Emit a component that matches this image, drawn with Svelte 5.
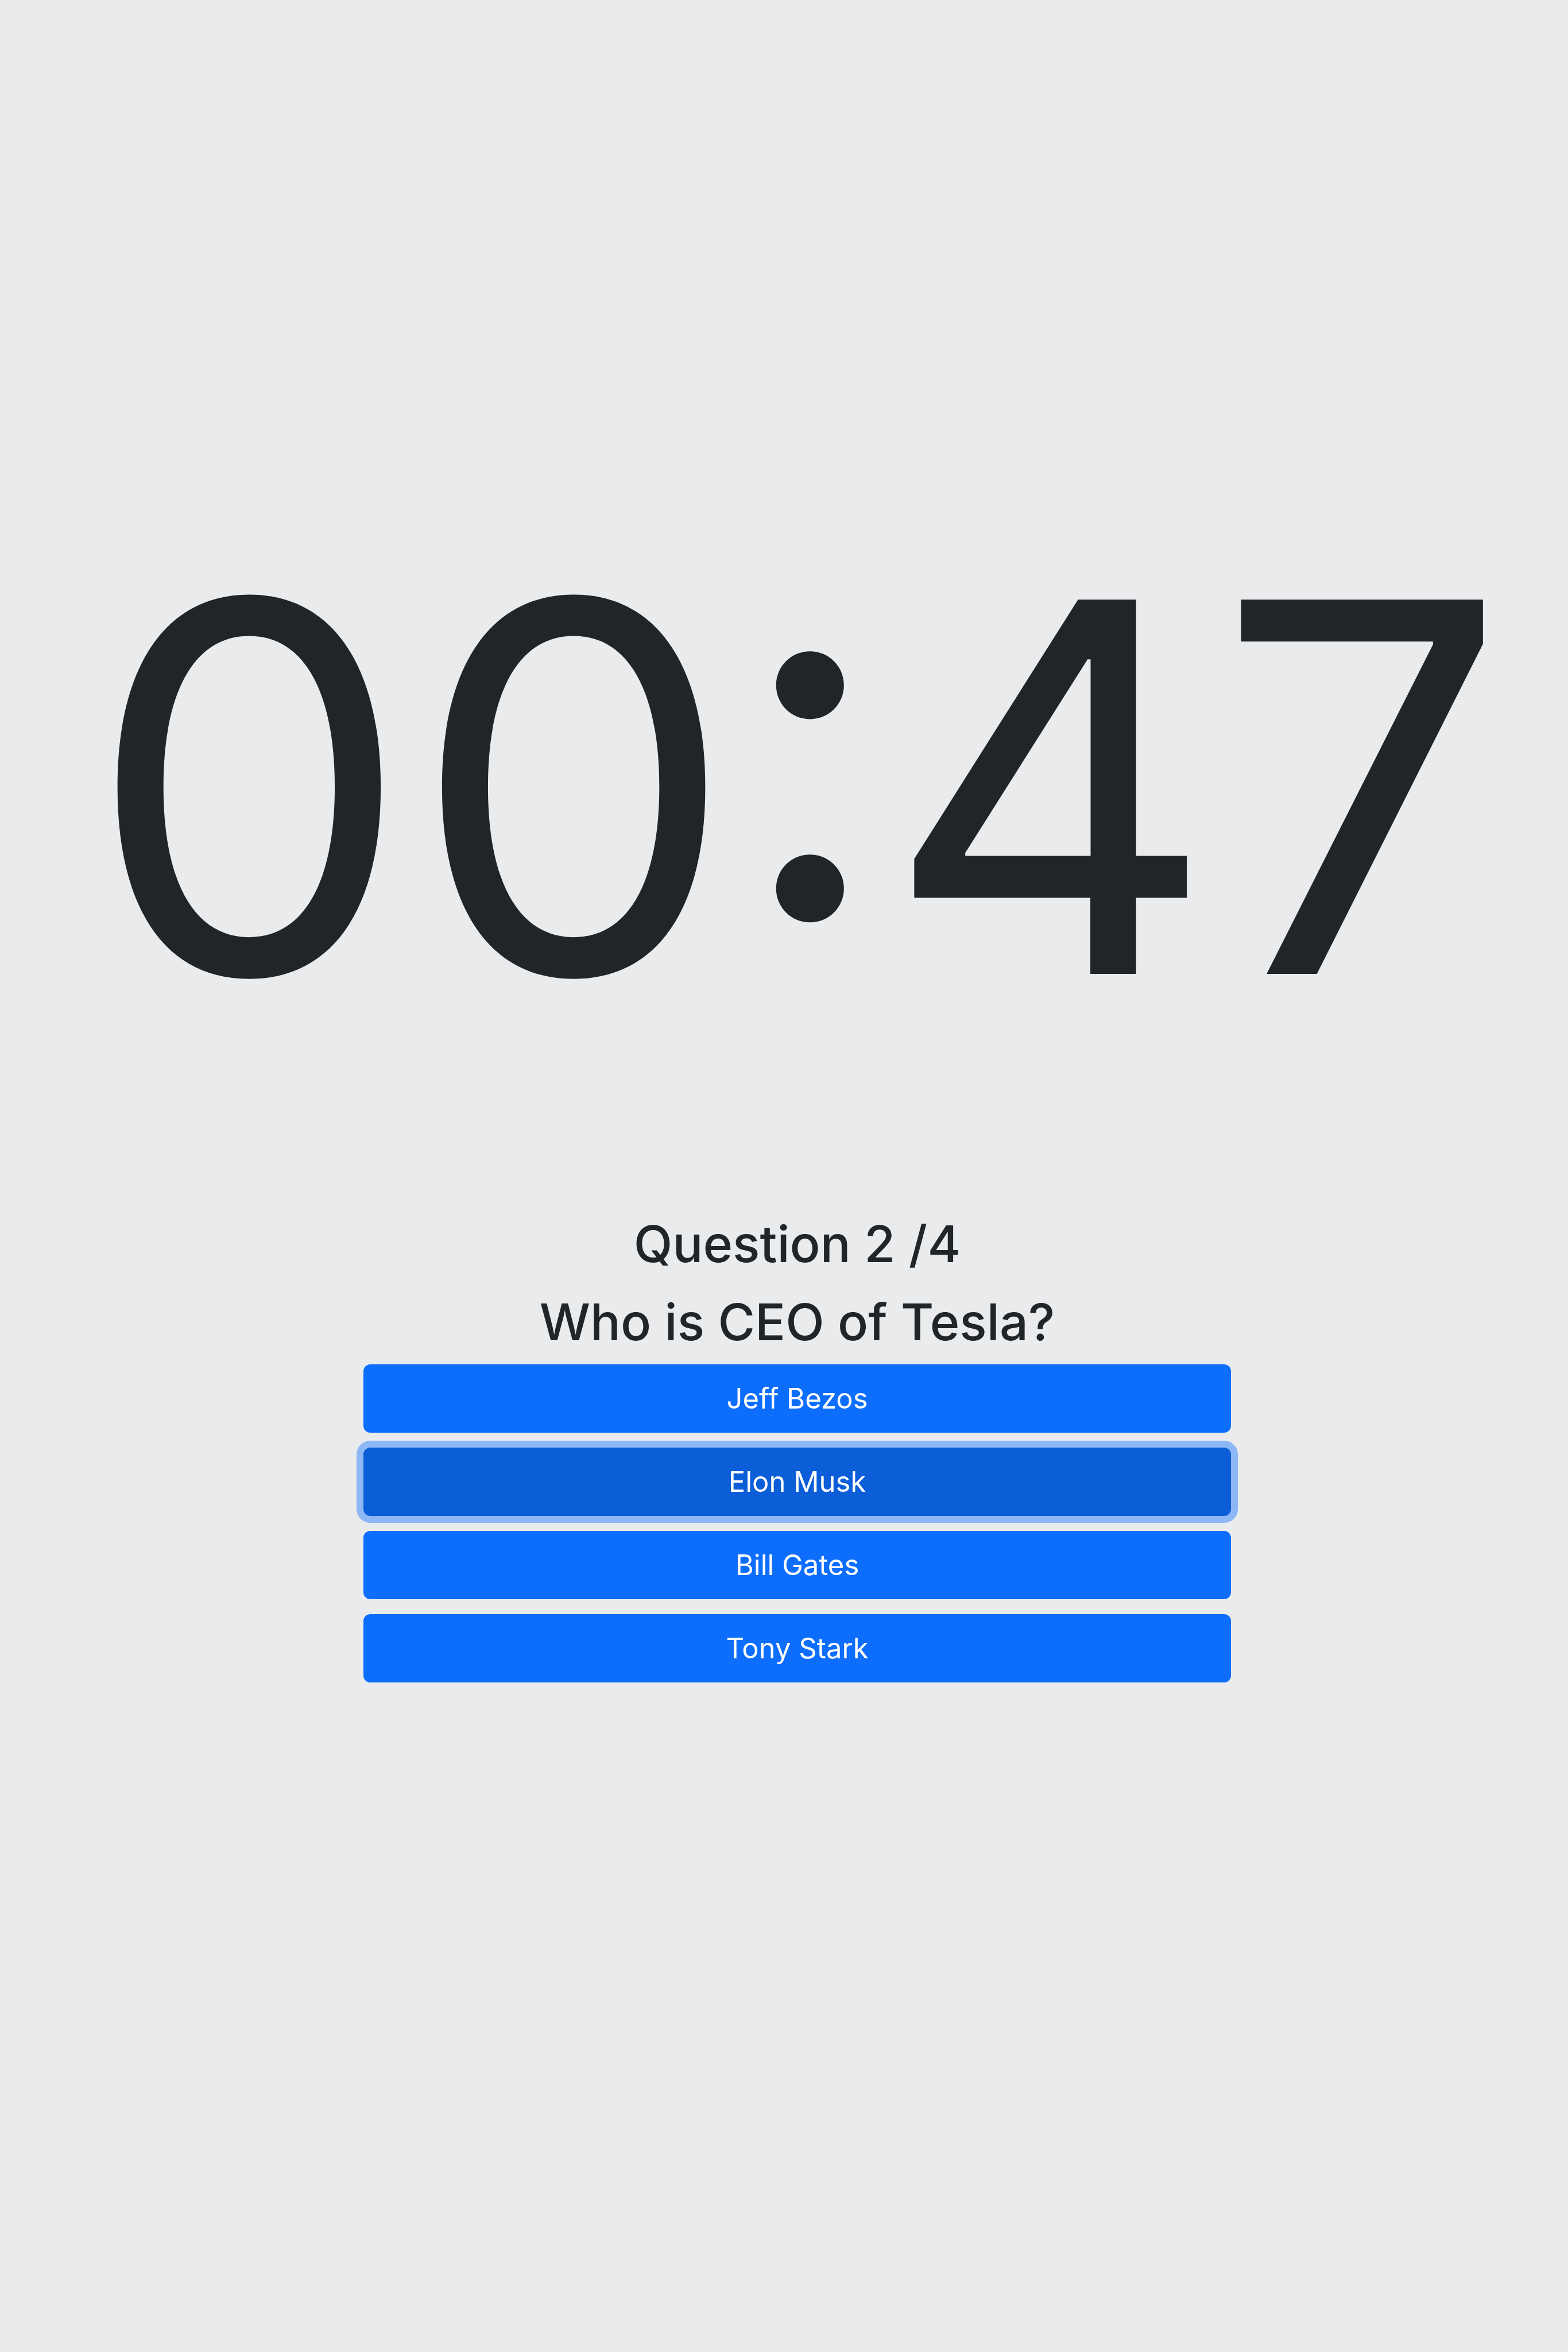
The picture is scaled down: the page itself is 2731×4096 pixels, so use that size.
<script>
  const answers = ['Jeff Bezos', 'Elon Musk', 'Bill Gates', 'Tony Stark'];
  let selected = $state('Elon Musk');
</script>

<main>
  <time class="timer">00:47</time>
  <section class="quiz">
    <h1>Question 2 /4</h1>
    <h2>Who is CEO of Tesla?</h2>
    <div class="answers">
      {#each answers as answer}
        <button type="button" class:selected={selected === answer} onclick={() => (selected = answer)}>{answer}</button>
      {/each}
    </div>
  </section>
</main>

<style>
  :global(body) {
    background: #e9ebec;
  }
  main {
    box-sizing: border-box;
    min-height: 100vh;
    padding: 820px 0 0 46px;
    display: flex;
    flex-direction: column;
    align-items: center;
    color: #212529;
    font-family: Inter, 'Liberation Sans', sans-serif;
  }
  .timer {
    font-size: 896px;
    line-height: 1100px;
    white-space: nowrap;
  }
  .quiz {
    width: 56.25%;
    margin-top: 190px;
    text-align: center;
  }
  h1,
  h2 {
    margin: 0;
    font-size: 88px;
    font-weight: 500;
    line-height: 112px;
  }
  h2 {
    margin-top: 24px;
  }
  .answers {
    display: flex;
    flex-direction: column;
    gap: 26px;
    margin-top: 18px;
  }
  button {
    height: 119px;
    border: 0;
    border-radius: 12px;
    background: #0d6efd;
    color: #fff;
    font-family: inherit;
    font-size: 49px;
    line-height: 78px;
  }
  button.selected {
    background: #0b5ed7;
    box-shadow: 0 0 0 12px rgba(49, 132, 253, 0.5);
  }
</style>
